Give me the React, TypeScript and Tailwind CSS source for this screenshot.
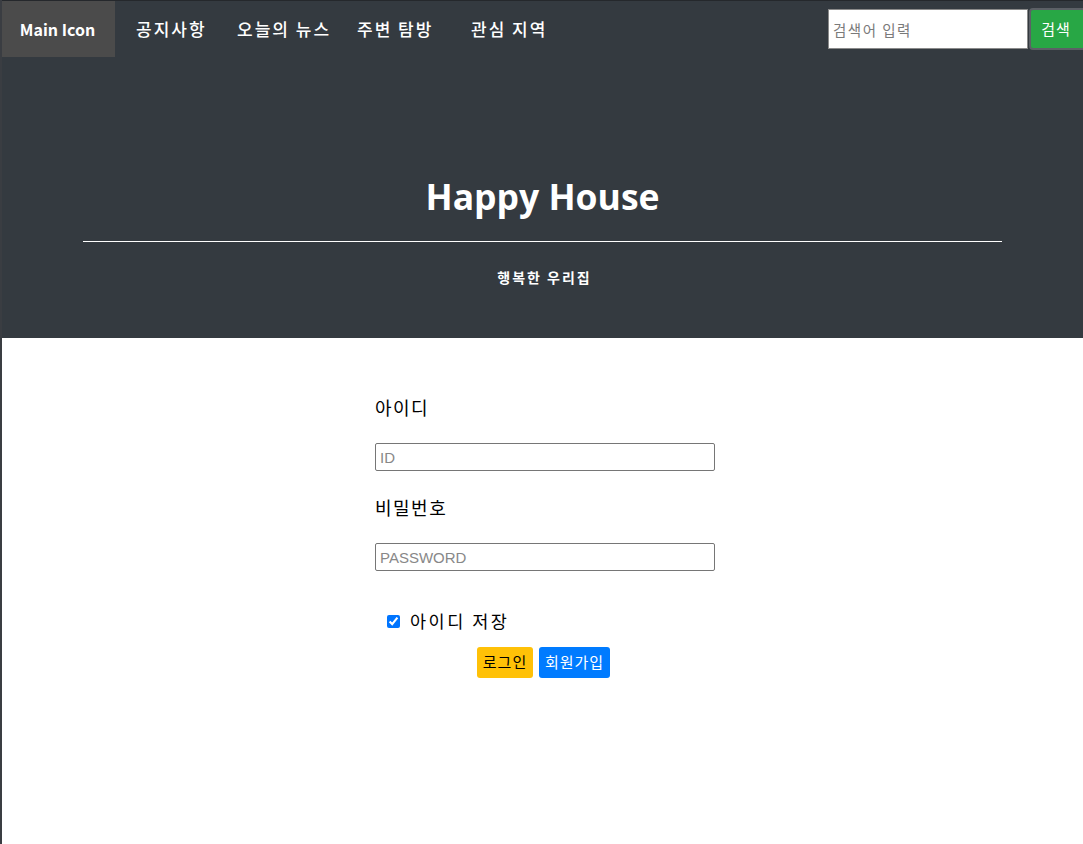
import React from "react";

const KR = { fontFamily: '"Noto Sans CJK KR", "Noto Sans", sans-serif' };

export default function App() {
  return (
    <div className="flex min-h-screen w-full overflow-hidden bg-white" style={KR}>
      <div className="w-[2px] shrink-0 bg-[#3a3d42]" />
      <div className="flex min-w-0 flex-1 flex-col">
        <header className="flex h-[338px] flex-col border-t border-[#25282c] bg-[#343a40] text-white">
          <nav className="flex h-[56px] items-center">
            <div className="flex h-full w-[113px] items-center justify-center bg-[#4b4b4b] pr-[2px] text-[16px] font-bold tracking-[0px]">
              Main Icon
            </div>
            <div className="ml-[21px] w-[101px] text-[17px] font-medium tracking-[2px]">공지사항</div>
            <div className="w-[120px] text-[17px] font-medium tracking-[2px]">오늘의 뉴스</div>
            <div className="w-[114px] text-[17px] font-medium tracking-[2px]">주변 탐방</div>
            <div className="w-[100px] text-[17px] font-medium tracking-[2px]">관심 지역</div>
            <div className="ml-auto mr-[-3px] flex items-center">
              <input
                className="h-[40px] w-[200px] border border-[#8a8a8a] bg-white px-[4px] text-[14.5px] tracking-[1.5px] text-black placeholder:text-[#7a7a7a] outline-none"
                placeholder="검색어 입력"
                style={KR}
              />
              <button className="ml-[1px] h-[42px] w-[57px] rounded-[4px] border-2 border-[#5c6066] bg-[#28a745] pr-[3px] text-[15px] tracking-[1px] text-white">
                검색
              </button>
            </div>
          </nav>
          <div className="flex flex-1 flex-col items-center px-[81px]">
            <h1 className="mt-[115px] text-[35.5px] font-bold leading-[48px]" style={{ fontFamily: '"Open Sans", "Noto Sans CJK KR", sans-serif' }}>
              Happy House
            </h1>
            <div className="mt-[21px] h-px w-full bg-white" />
            <div className="mt-[25px] pl-[4px] text-[14px] font-bold tracking-[2px]">행복한 우리집</div>
          </div>
        </header>
        <main className="ml-[373px] flex w-[340px] flex-col pt-[56px] text-black">
          <label className="h-[27px] text-[18px] leading-[27px] tracking-[1.5px]">아이디</label>
          <input
            className="mt-[22px] h-[28px] w-full rounded-[2px] border border-[#767676] px-[4px] text-[15px] placeholder:text-[#888] outline-none"
            placeholder="ID"
            style={{ fontFamily: '"Liberation Sans", Arial, sans-serif' }}
          />
          <label className="mt-[23px] h-[27px] text-[18px] leading-[27px] tracking-[1.5px]">비밀번호</label>
          <input
            className="mt-[22px] h-[28px] w-full rounded-[2px] border border-[#767676] px-[4px] text-[15px] placeholder:text-[#888] outline-none"
            placeholder="PASSWORD"
            style={{ fontFamily: '"Liberation Sans", Arial, sans-serif' }}
          />
          <div className="mt-[38px] flex h-[24px] items-center pl-[12px]">
            <input type="checkbox" defaultChecked className="h-[13px] w-[13px] accent-[#0075ff]" />
            <span className="ml-[10px] text-[17.5px] tracking-[2.5px]">아이디 저장</span>
          </div>
          <div className="mt-[14px] flex justify-center gap-[6px] pr-[4px]">
            <button className="h-[31px] w-[56px] rounded-[3px] bg-[#ffc107] pl-[1px] text-[15px] tracking-[1px] text-black">로그인</button>
            <button className="h-[31px] w-[71px] rounded-[3px] bg-[#007bff] pl-[1px] text-[15px] tracking-[1px] text-white">회원가입</button>
          </div>
        </main>
      </div>
    </div>
  );
}
